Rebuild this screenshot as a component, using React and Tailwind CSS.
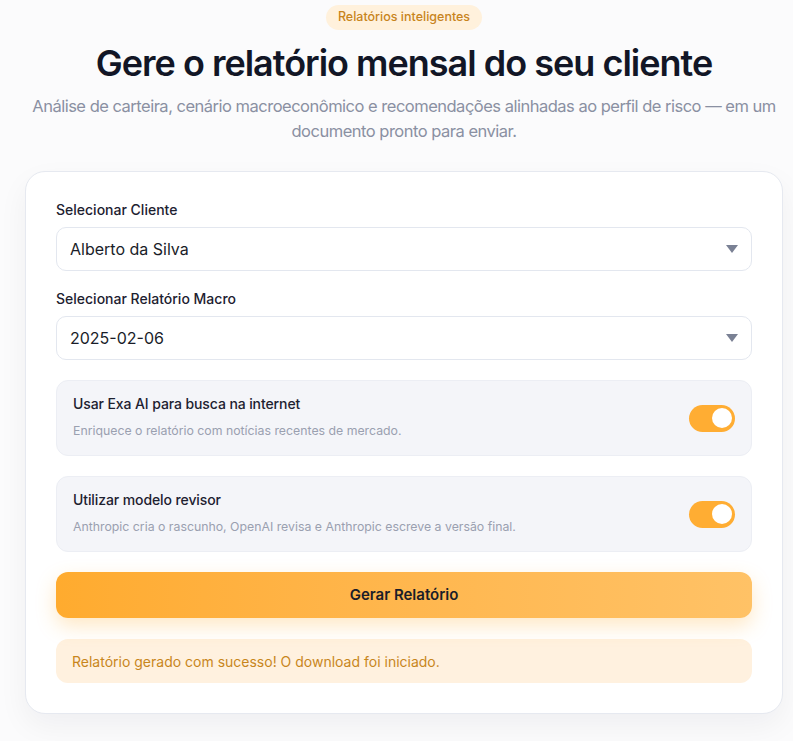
import React, { useState } from 'react';

const font = { fontFamily: 'Inter, "Noto Sans", sans-serif' };

function Toggle({ on, onChange }) {
  return (
    <button
      onClick={() => onChange(!on)}
      className={`relative h-[27px] w-[46px] shrink-0 rounded-full transition-colors ${on ? 'bg-[#ffad33]' : 'bg-gray-300'}`}
    >
      <span className={`absolute top-[3.5px] h-[20px] w-[20px] rounded-full bg-white transition-all ${on ? 'left-[23px]' : 'left-[3px]'}`} />
    </button>
  );
}

function SelectBox({ value, options, onChange }) {
  return (
    <div className="relative">
      <select
        value={value}
        onChange={(e) => onChange(e.target.value)}
        className="h-[44px] w-full appearance-none rounded-[10px] border border-[#e3e7ef] bg-white pl-[13px] pr-10 text-[16px] text-[#1a1d29] outline-none"
      >
        {options.map(o => <option key={o} value={o}>{o}</option>)}
      </select>
      <svg className="pointer-events-none absolute right-[14px] top-[18px]" width="12" height="9" viewBox="0 0 12 9">
        <path d="M0 0 L12 0 L6 8 Z" fill="#7a8194" />
      </svg>
    </div>
  );
}

function OptionRow({ title, desc, on, onChange }) {
  return (
    <div className="flex h-[76px] items-center justify-between rounded-[12px] border border-[#eceef4] bg-[#f4f5f9] px-[16px]">
      <div className="-mt-[2px]">
        <div className="text-[14px] font-medium tracking-[-0.1px] text-[#1d2130]">{title}</div>
        <div className="mt-[8px] text-[12.3px] text-[#9aa0b0]">{desc}</div>
      </div>
      <Toggle on={on} onChange={onChange} />
    </div>
  );
}

export default function App() {
  const [cliente, setCliente] = useState('Alberto da Silva');
  const [macro, setMacro] = useState('2025-02-06');
  const [exa, setExa] = useState(true);
  const [revisor, setRevisor] = useState(true);

  return (
    <div style={font} className="min-h-[741px] bg-[#fbfbfc] pl-[25px] pr-[10px] pt-[5px] pb-[27px]">
      <div className="flex flex-col items-center text-center">
        <span className="flex h-[25px] items-center rounded-full bg-[#fff1dc] px-[12px] text-[12.5px] font-medium text-[#c8841c]">
          Relatórios inteligentes
        </span>
        <h1 className="mt-[11px] text-[36px] font-semibold leading-[44px] tracking-[-1px] text-[#121626]">
          Gere o relatório mensal do seu cliente
        </h1>
        <p className="mt-[9px] text-[16.5px] leading-[25px] tracking-[-0.5px] text-[#8a90a2]">
          Análise de carteira, cenário macroeconômico e recomendações alinhadas ao perfil de risco — em um documento pronto para enviar.
        </p>
      </div>

      <div className="mt-[27px] rounded-[20px] border border-[#e6e9f0] bg-white px-[30px] pt-[27px] pb-[30px] shadow-[0_12px_30px_rgba(20,25,45,0.05)]">
        <label className="block text-[14px] font-medium text-[#1d2130]">Selecionar Cliente</label>
        <div className="mt-[7px]">
          <SelectBox value={cliente} onChange={setCliente} options={['Alberto da Silva', 'Beatriz Souza', 'Carlos Mendes']} />
        </div>

        <label className="mt-[17px] block text-[14px] font-medium text-[#1d2130]">Selecionar Relatório Macro</label>
        <div className="mt-[7px]">
          <SelectBox value={macro} onChange={setMacro} options={['2025-02-06', '2025-01-08', '2024-12-05']} />
        </div>

        <div className="mt-[20px] flex flex-col gap-[20px]">
          <OptionRow
            title="Usar Exa AI para busca na internet"
            desc="Enriquece o relatório com notícias recentes de mercado."
            on={exa}
            onChange={setExa}
          />
          <OptionRow
            title="Utilizar modelo revisor"
            desc="Anthropic cria o rascunho, OpenAI revisa e Anthropic escreve a versão final."
            on={revisor}
            onChange={setRevisor}
          />
        </div>

        <button className="mt-[20px] h-[46px] w-full rounded-[12px] bg-gradient-to-r from-[#ffab2e] to-[#ffc266] text-[15px] font-semibold text-[#1a1d29] shadow-[0_8px_20px_rgba(255,171,46,0.28)]">
          Gerar Relatório
        </button>

        <div className="mt-[21px] flex h-[44px] items-center rounded-[12px] bg-[#fff1df] px-[16px] text-[14px] text-[#c8861c]">
          Relatório gerado com sucesso! O download foi iniciado.
        </div>
      </div>
    </div>
  );
}
